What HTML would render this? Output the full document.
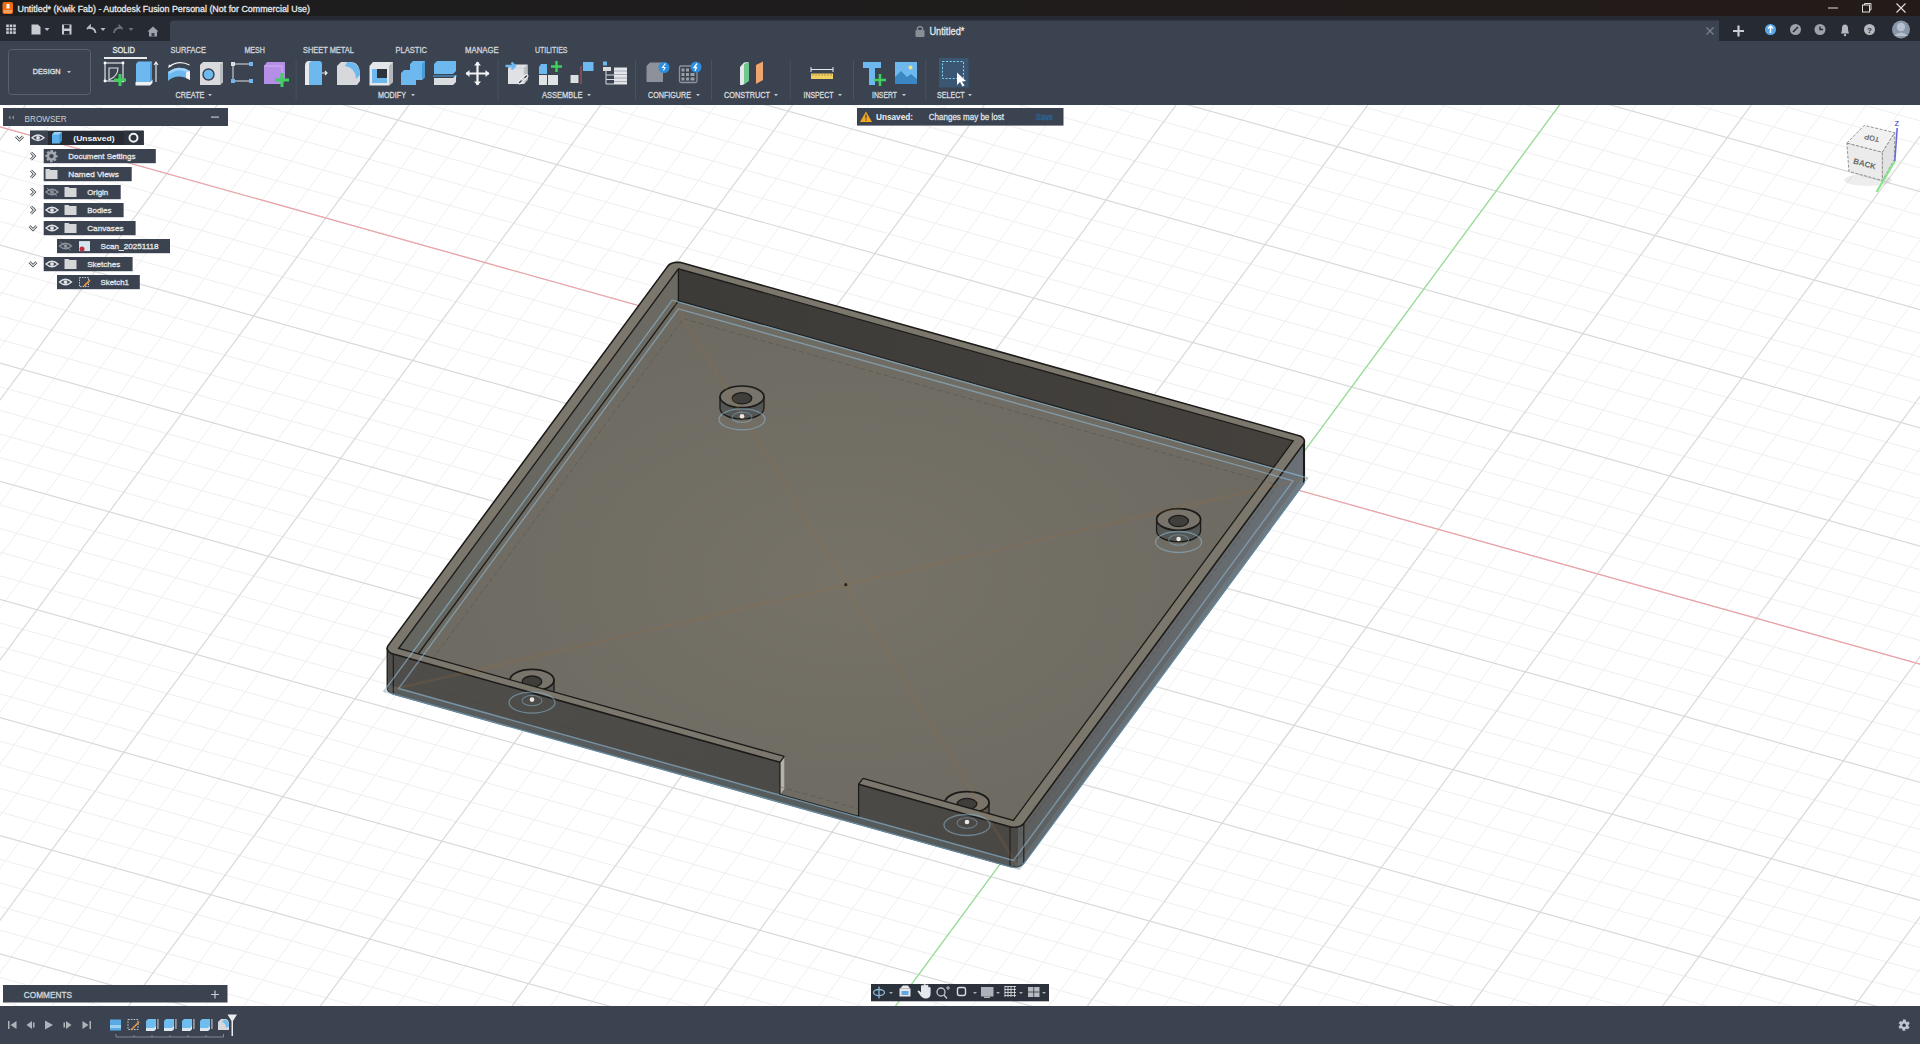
<!DOCTYPE html>
<html><head><meta charset="utf-8"><title>Autodesk Fusion</title>
<style>
html,body{margin:0;padding:0;width:1920px;height:1044px;overflow:hidden;background:#fff;font-family:"Liberation Sans", sans-serif;}
#root{position:relative;width:1920px;height:1044px;overflow:hidden;}
svg text{font-family:"Liberation Sans", sans-serif;}
</style></head><body><div id="root">
<svg width="1920" height="1044" viewBox="0 0 1920 1044" style="position:absolute;left:0;top:0"><defs>
<linearGradient id="gBack" x1="0" y1="0" x2="1" y2="0"><stop offset="0" stop-color="#3d3b38"/><stop offset="1" stop-color="#44413d"/></linearGradient>
<linearGradient id="gLeft" x1="0" y1="0" x2="0" y2="1"><stop offset="0" stop-color="#6c6a63"/><stop offset="1" stop-color="#64655f"/></linearGradient>
<radialGradient id="gFloor" cx="0.5" cy="0.5" r="0.7"><stop offset="0" stop-color="#767268"/><stop offset="1" stop-color="#6a675f"/></radialGradient>
<linearGradient id="gFront" x1="0" y1="0" x2="1" y2="0"><stop offset="0" stop-color="#4f4d49"/><stop offset="1" stop-color="#4a4845"/></linearGradient>
<linearGradient id="gRight" x1="0" y1="0" x2="1" y2="0"><stop offset="0" stop-color="#5d5f5f"/><stop offset="1" stop-color="#6a7075"/></linearGradient>
</defs><rect x="0" y="0" width="1920" height="1044" fill="#ffffff"/><g stroke="#efefef" stroke-width="1"><line x1="269.8" y1="-1215.2" x2="-1462.3" y2="1135.3"/><line x1="301.6" y1="-1206.3" x2="-1430.5" y2="1144.2"/><line x1="333.4" y1="-1197.4" x2="-1398.7" y2="1153.1"/><line x1="365.2" y1="-1188.5" x2="-1366.9" y2="1162.0"/><line x1="428.7" y1="-1170.8" x2="-1303.3" y2="1179.8"/><line x1="460.5" y1="-1161.9" x2="-1271.5" y2="1188.7"/><line x1="492.3" y1="-1153.0" x2="-1239.7" y2="1197.6"/><line x1="524.1" y1="-1144.1" x2="-1208.0" y2="1206.5"/><line x1="587.7" y1="-1126.3" x2="-1144.4" y2="1224.3"/><line x1="619.5" y1="-1117.4" x2="-1112.6" y2="1233.2"/><line x1="651.3" y1="-1108.5" x2="-1080.8" y2="1242.1"/><line x1="683.1" y1="-1099.6" x2="-1049.0" y2="1251.0"/><line x1="746.7" y1="-1081.8" x2="-985.4" y2="1268.8"/><line x1="778.5" y1="-1072.9" x2="-953.6" y2="1277.7"/><line x1="810.3" y1="-1064.0" x2="-921.8" y2="1286.6"/><line x1="842.1" y1="-1055.1" x2="-890.0" y2="1295.5"/><line x1="905.7" y1="-1037.3" x2="-826.4" y2="1313.2"/><line x1="937.4" y1="-1028.4" x2="-794.6" y2="1322.1"/><line x1="969.2" y1="-1019.5" x2="-762.8" y2="1331.0"/><line x1="1001.0" y1="-1010.6" x2="-731.0" y2="1339.9"/><line x1="1064.6" y1="-992.8" x2="-667.5" y2="1357.7"/><line x1="1096.4" y1="-983.9" x2="-635.7" y2="1366.6"/><line x1="1128.2" y1="-975.0" x2="-603.9" y2="1375.5"/><line x1="1160.0" y1="-966.1" x2="-572.1" y2="1384.4"/><line x1="1223.6" y1="-948.4" x2="-508.5" y2="1402.2"/><line x1="1255.4" y1="-939.5" x2="-476.7" y2="1411.1"/><line x1="1287.2" y1="-930.6" x2="-444.9" y2="1420.0"/><line x1="1319.0" y1="-921.7" x2="-413.1" y2="1428.9"/><line x1="1382.6" y1="-903.9" x2="-349.5" y2="1446.7"/><line x1="1414.4" y1="-895.0" x2="-317.7" y2="1455.6"/><line x1="1446.2" y1="-886.1" x2="-285.9" y2="1464.5"/><line x1="1477.9" y1="-877.2" x2="-254.1" y2="1473.4"/><line x1="1541.5" y1="-859.4" x2="-190.5" y2="1491.2"/><line x1="1573.3" y1="-850.5" x2="-158.8" y2="1500.1"/><line x1="1605.1" y1="-841.6" x2="-127.0" y2="1509.0"/><line x1="1636.9" y1="-832.7" x2="-95.2" y2="1517.9"/><line x1="1700.5" y1="-814.9" x2="-31.6" y2="1535.6"/><line x1="1732.3" y1="-806.0" x2="0.2" y2="1544.5"/><line x1="1764.1" y1="-797.1" x2="32.0" y2="1553.4"/><line x1="1795.9" y1="-788.2" x2="63.8" y2="1562.3"/><line x1="1859.5" y1="-770.4" x2="127.4" y2="1580.1"/><line x1="1891.3" y1="-761.5" x2="159.2" y2="1589.0"/><line x1="1923.1" y1="-752.6" x2="191.0" y2="1597.9"/><line x1="1954.9" y1="-743.7" x2="222.8" y2="1606.8"/><line x1="2018.4" y1="-726.0" x2="286.4" y2="1624.6"/><line x1="2050.2" y1="-717.1" x2="318.2" y2="1633.5"/><line x1="2082.0" y1="-708.2" x2="350.0" y2="1642.4"/><line x1="2113.8" y1="-699.3" x2="381.7" y2="1651.3"/><line x1="2177.4" y1="-681.5" x2="445.3" y2="1669.1"/><line x1="2209.2" y1="-672.6" x2="477.1" y2="1678.0"/><line x1="2241.0" y1="-663.7" x2="508.9" y2="1686.9"/><line x1="2272.8" y1="-654.8" x2="540.7" y2="1695.8"/><line x1="2336.4" y1="-637.0" x2="604.3" y2="1713.6"/><line x1="2368.2" y1="-628.1" x2="636.1" y2="1722.5"/><line x1="2400.0" y1="-619.2" x2="667.9" y2="1731.4"/><line x1="2431.8" y1="-610.3" x2="699.7" y2="1740.3"/><line x1="2495.4" y1="-592.5" x2="763.3" y2="1758.0"/><line x1="2527.1" y1="-583.6" x2="795.1" y2="1766.9"/><line x1="2558.9" y1="-574.7" x2="826.9" y2="1775.8"/><line x1="2590.7" y1="-565.8" x2="858.7" y2="1784.7"/><line x1="2654.3" y1="-548.0" x2="922.2" y2="1802.5"/><line x1="2686.1" y1="-539.1" x2="954.0" y2="1811.4"/><line x1="2717.9" y1="-530.2" x2="985.8" y2="1820.3"/><line x1="2749.7" y1="-521.3" x2="1017.6" y2="1829.2"/><line x1="2813.3" y1="-503.6" x2="1081.2" y2="1847.0"/><line x1="2845.1" y1="-494.7" x2="1113.0" y2="1855.9"/><line x1="2876.9" y1="-485.8" x2="1144.8" y2="1864.8"/><line x1="2908.7" y1="-476.9" x2="1176.6" y2="1873.7"/><line x1="2972.3" y1="-459.1" x2="1240.2" y2="1891.5"/><line x1="3004.1" y1="-450.2" x2="1272.0" y2="1900.4"/><line x1="3035.9" y1="-441.3" x2="1303.8" y2="1909.3"/><line x1="3067.6" y1="-432.4" x2="1335.6" y2="1918.2"/><line x1="3131.2" y1="-414.6" x2="1399.2" y2="1936.0"/><line x1="3163.0" y1="-405.7" x2="1430.9" y2="1944.9"/><line x1="3194.8" y1="-396.8" x2="1462.7" y2="1953.8"/><line x1="3226.6" y1="-387.9" x2="1494.5" y2="1962.7"/><line x1="3290.2" y1="-370.1" x2="1558.1" y2="1980.4"/><line x1="3322.0" y1="-361.2" x2="1589.9" y2="1989.3"/><line x1="3353.8" y1="-352.3" x2="1621.7" y2="1998.2"/><line x1="3385.6" y1="-343.4" x2="1653.5" y2="2007.1"/><line x1="-527.4" y1="-705.9" x2="3287.9" y2="361.7"/><line x1="-541.8" y1="-686.3" x2="3273.4" y2="381.2"/><line x1="-556.3" y1="-666.7" x2="3259.0" y2="400.8"/><line x1="-570.7" y1="-647.1" x2="3244.6" y2="420.4"/><line x1="-599.6" y1="-607.9" x2="3215.7" y2="459.6"/><line x1="-614.0" y1="-588.3" x2="3201.3" y2="479.2"/><line x1="-628.5" y1="-568.7" x2="3186.8" y2="498.8"/><line x1="-642.9" y1="-549.2" x2="3172.4" y2="518.4"/><line x1="-671.8" y1="-510.0" x2="3143.5" y2="557.5"/><line x1="-686.2" y1="-490.4" x2="3129.1" y2="577.1"/><line x1="-700.6" y1="-470.8" x2="3114.7" y2="596.7"/><line x1="-715.1" y1="-451.2" x2="3100.2" y2="616.3"/><line x1="-743.9" y1="-412.0" x2="3071.4" y2="655.5"/><line x1="-758.4" y1="-392.5" x2="3056.9" y2="675.1"/><line x1="-772.8" y1="-372.9" x2="3042.5" y2="694.7"/><line x1="-787.2" y1="-353.3" x2="3028.1" y2="714.2"/><line x1="-816.1" y1="-314.1" x2="2999.2" y2="753.4"/><line x1="-830.5" y1="-294.5" x2="2984.8" y2="773.0"/><line x1="-845.0" y1="-274.9" x2="2970.3" y2="792.6"/><line x1="-859.4" y1="-255.3" x2="2955.9" y2="812.2"/><line x1="-888.3" y1="-216.2" x2="2927.0" y2="851.4"/><line x1="-902.7" y1="-196.6" x2="2912.6" y2="870.9"/><line x1="-917.1" y1="-177.0" x2="2898.1" y2="890.5"/><line x1="-931.6" y1="-157.4" x2="2883.7" y2="910.1"/><line x1="-960.4" y1="-118.2" x2="2854.8" y2="949.3"/><line x1="-974.9" y1="-98.6" x2="2840.4" y2="968.9"/><line x1="-989.3" y1="-79.0" x2="2826.0" y2="988.5"/><line x1="-1003.7" y1="-59.5" x2="2811.5" y2="1008.1"/><line x1="-1032.6" y1="-20.3" x2="2782.7" y2="1047.2"/><line x1="-1047.0" y1="-0.7" x2="2768.2" y2="1066.8"/><line x1="-1061.5" y1="18.9" x2="2753.8" y2="1086.4"/><line x1="-1075.9" y1="38.5" x2="2739.4" y2="1106.0"/><line x1="-1104.8" y1="77.7" x2="2710.5" y2="1145.2"/><line x1="-1119.2" y1="97.2" x2="2696.1" y2="1164.8"/><line x1="-1133.6" y1="116.8" x2="2681.6" y2="1184.4"/><line x1="-1148.1" y1="136.4" x2="2667.2" y2="1203.9"/><line x1="-1176.9" y1="175.6" x2="2638.3" y2="1243.1"/><line x1="-1191.4" y1="195.2" x2="2623.9" y2="1262.7"/><line x1="-1205.8" y1="214.8" x2="2609.5" y2="1282.3"/><line x1="-1220.2" y1="234.4" x2="2595.0" y2="1301.9"/><line x1="-1249.1" y1="273.5" x2="2566.2" y2="1341.1"/><line x1="-1263.5" y1="293.1" x2="2551.7" y2="1360.6"/><line x1="-1278.0" y1="312.7" x2="2537.3" y2="1380.2"/><line x1="-1292.4" y1="332.3" x2="2522.9" y2="1399.8"/><line x1="-1321.3" y1="371.5" x2="2494.0" y2="1439.0"/><line x1="-1335.7" y1="391.1" x2="2479.6" y2="1458.6"/><line x1="-1350.2" y1="410.7" x2="2465.1" y2="1478.2"/><line x1="-1364.6" y1="430.2" x2="2450.7" y2="1497.8"/><line x1="-1393.5" y1="469.4" x2="2421.8" y2="1536.9"/><line x1="-1407.9" y1="489.0" x2="2407.4" y2="1556.5"/><line x1="-1422.3" y1="508.6" x2="2393.0" y2="1576.1"/><line x1="-1436.8" y1="528.2" x2="2378.5" y2="1595.7"/><line x1="-1465.6" y1="567.4" x2="2349.7" y2="1634.9"/><line x1="-1480.1" y1="586.9" x2="2335.2" y2="1654.5"/><line x1="-1494.5" y1="606.5" x2="2320.8" y2="1674.1"/><line x1="-1508.9" y1="626.1" x2="2306.4" y2="1693.6"/><line x1="-1537.8" y1="665.3" x2="2277.5" y2="1732.8"/><line x1="-1552.2" y1="684.9" x2="2263.1" y2="1752.4"/><line x1="-1566.7" y1="704.5" x2="2248.6" y2="1772.0"/><line x1="-1581.1" y1="724.1" x2="2234.2" y2="1791.6"/><line x1="-1610.0" y1="763.2" x2="2205.3" y2="1830.8"/><line x1="-1624.4" y1="782.8" x2="2190.9" y2="1850.3"/><line x1="-1638.8" y1="802.4" x2="2176.4" y2="1869.9"/><line x1="-1653.3" y1="822.0" x2="2162.0" y2="1889.5"/><line x1="-1682.1" y1="861.2" x2="2133.1" y2="1928.7"/><line x1="-1696.6" y1="880.8" x2="2118.7" y2="1948.3"/><line x1="-1711.0" y1="900.4" x2="2104.3" y2="1967.9"/><line x1="-1725.4" y1="919.9" x2="2089.8" y2="1987.5"/><line x1="-1754.3" y1="959.1" x2="2061.0" y2="2026.6"/><line x1="-1768.7" y1="978.7" x2="2046.5" y2="2046.2"/><line x1="-1783.2" y1="998.3" x2="2032.1" y2="2065.8"/><line x1="-1797.6" y1="1017.9" x2="2017.7" y2="2085.4"/></g><g stroke="#d9d9d9" stroke-width="1.2"><line x1="238.0" y1="-1224.1" x2="-1494.1" y2="1126.4"/><line x1="396.9" y1="-1179.6" x2="-1335.1" y2="1170.9"/><line x1="555.9" y1="-1135.2" x2="-1176.2" y2="1215.4"/><line x1="714.9" y1="-1090.7" x2="-1017.2" y2="1259.9"/><line x1="873.9" y1="-1046.2" x2="-858.2" y2="1304.3"/><line x1="1032.8" y1="-1001.7" x2="-699.2" y2="1348.8"/><line x1="1191.8" y1="-957.2" x2="-540.3" y2="1393.3"/><line x1="1350.8" y1="-912.8" x2="-381.3" y2="1437.8"/><line x1="1509.7" y1="-868.3" x2="-222.3" y2="1482.3"/><line x1="1668.7" y1="-823.8" x2="-63.4" y2="1526.8"/><line x1="1827.7" y1="-779.3" x2="95.6" y2="1571.2"/><line x1="1986.6" y1="-734.8" x2="254.6" y2="1615.7"/><line x1="2145.6" y1="-690.4" x2="413.5" y2="1660.2"/><line x1="2304.6" y1="-645.9" x2="572.5" y2="1704.7"/><line x1="2463.6" y1="-601.4" x2="731.5" y2="1749.2"/><line x1="2622.5" y1="-556.9" x2="890.4" y2="1793.6"/><line x1="2781.5" y1="-512.4" x2="1049.4" y2="1838.1"/><line x1="2940.5" y1="-468.0" x2="1208.4" y2="1882.6"/><line x1="3099.4" y1="-423.5" x2="1367.4" y2="1927.1"/><line x1="3258.4" y1="-379.0" x2="1526.3" y2="1971.5"/><line x1="-513.0" y1="-725.4" x2="3302.3" y2="342.1"/><line x1="-585.1" y1="-627.5" x2="3230.1" y2="440.0"/><line x1="-657.3" y1="-529.6" x2="3158.0" y2="538.0"/><line x1="-729.5" y1="-431.6" x2="3085.8" y2="635.9"/><line x1="-801.7" y1="-333.7" x2="3013.6" y2="733.8"/><line x1="-873.8" y1="-235.7" x2="2941.4" y2="831.8"/><line x1="-946.0" y1="-137.8" x2="2869.3" y2="929.7"/><line x1="-1018.2" y1="-39.9" x2="2797.1" y2="1027.7"/><line x1="-1090.3" y1="58.1" x2="2724.9" y2="1125.6"/><line x1="-1162.5" y1="156.0" x2="2652.8" y2="1223.5"/><line x1="-1234.7" y1="254.0" x2="2580.6" y2="1321.5"/><line x1="-1306.8" y1="351.9" x2="2508.4" y2="1419.4"/><line x1="-1379.0" y1="449.8" x2="2436.3" y2="1517.3"/><line x1="-1451.2" y1="547.8" x2="2364.1" y2="1615.3"/><line x1="-1523.4" y1="645.7" x2="2291.9" y2="1713.2"/><line x1="-1595.5" y1="743.7" x2="2219.8" y2="1811.2"/><line x1="-1667.7" y1="841.6" x2="2147.6" y2="1909.1"/><line x1="-1739.9" y1="939.5" x2="2075.4" y2="2007.0"/></g><line x1="-946.0" y1="-137.8" x2="2869.3" y2="929.7" stroke="#efa0a6" stroke-width="1.15" /><line x1="2145.6" y1="-690.4" x2="413.5" y2="1660.2" stroke="#93df93" stroke-width="1.2" /><polygon points="678.4,268.8 1293.2,440.8 1293.2,472.8 678.4,300.8" fill="url(#gBack)" /><polygon points="678.4,268.8 398.6,648.5 398.6,680.5 678.4,300.8" fill="url(#gLeft)" /><polygon points="678.4,300.8 1293.2,472.8 1013.4,852.5 863.0,810.4 858.6,816.3 779.9,794.3 784.3,788.4 398.6,680.5" fill="url(#gFloor)" /><path d="M398.6,680.5 L678.4,300.8 L1293.2,472.8" fill="none" stroke="#1c1b19" stroke-width="1.3"/><line x1="678.4" y1="300.8" x2="678.4" y2="268.8" stroke="#1c1b19" stroke-width="1.3" /><path d="M720.0,396.8 L720.0,408.3 A22.0,10.8 0 0 0 764.0,408.3 L764.0,396.8 Z" fill="#545654" stroke="#1c1b19" stroke-width="1.3"/><ellipse cx="742.0" cy="396.8" rx="22.0" ry="10.8" fill="#78746b" stroke="#1c1b19" stroke-width="1.7"/><ellipse cx="742.0" cy="398.3" rx="9.8" ry="5.6" fill="#403e3a" stroke="#1c1b19" stroke-width="1.3"/><path d="M1156.6,519.5 L1156.6,531.0 A22.0,10.8 0 0 0 1200.6,531.0 L1200.6,519.5 Z" fill="#545654" stroke="#1c1b19" stroke-width="1.3"/><ellipse cx="1178.6" cy="519.5" rx="22.0" ry="10.8" fill="#78746b" stroke="#1c1b19" stroke-width="1.7"/><ellipse cx="1178.6" cy="521.0" rx="9.8" ry="5.6" fill="#403e3a" stroke="#1c1b19" stroke-width="1.3"/><path d="M510.0,680.1 L510.0,691.6 A22.0,10.8 0 0 0 554.0,691.6 L554.0,680.1 Z" fill="#545654" stroke="#1c1b19" stroke-width="1.3"/><ellipse cx="532.0" cy="680.1" rx="22.0" ry="10.8" fill="#78746b" stroke="#1c1b19" stroke-width="1.7"/><ellipse cx="532.0" cy="681.6" rx="9.8" ry="5.6" fill="#403e3a" stroke="#1c1b19" stroke-width="1.3"/><path d="M945.0,802.5 L945.0,814.0 A22.0,10.8 0 0 0 989.0,814.0 L989.0,802.5 Z" fill="#545654" stroke="#1c1b19" stroke-width="1.3"/><ellipse cx="967.0" cy="802.5" rx="22.0" ry="10.8" fill="#78746b" stroke="#1c1b19" stroke-width="1.7"/><ellipse cx="967.0" cy="804.0" rx="9.8" ry="5.6" fill="#403e3a" stroke="#1c1b19" stroke-width="1.3"/><polygon points="779.9,762.3 393.3,654.1 391.6,653.5 390.0,652.6 388.8,651.6 387.9,650.5 387.3,649.3 387.2,648.0 387.5,646.8 388.1,645.6 667.8,266.1 668.8,265.0 670.2,264.0 671.8,263.2 673.6,262.7 675.6,262.4 677.7,262.3 679.7,262.4 681.7,262.8 1298.3,435.4 1300.1,436.0 1301.6,436.8 1302.9,437.9 1303.8,439.0 1304.3,440.2 1304.4,441.5 1304.2,442.7 1303.5,443.9 1023.8,823.4 1022.8,824.5 1021.5,825.5 1019.8,826.3 1018.0,826.8 1016.0,827.1 1014.0,827.2 1011.9,827.1 1010.0,826.7 858.6,784.3 863.0,778.4 1013.4,820.5 1293.2,440.8 678.4,268.8 398.6,648.5 784.3,756.4" fill="#7b776d" /><polygon points="387.2,648.0 387.3,649.3 387.9,650.5 388.8,651.6 390.0,652.6 391.6,653.5 393.3,654.1 779.9,762.3 779.9,794.3 858.6,816.3 858.6,784.3 1010.0,826.7 1011.9,827.1 1014.0,827.2 1016.0,827.1 1018.0,826.8 1019.8,826.3 1021.5,825.5 1022.8,824.5 1023.8,823.4 1023.8,863.4 1022.8,864.5 1021.5,865.5 1019.8,866.3 1018.0,866.8 1016.0,867.1 1014.0,867.2 1011.9,867.1 1010.0,866.7 858.6,824.3 779.9,802.3 393.3,694.1 391.6,693.5 390.0,692.6 388.8,691.6 387.9,690.5 387.3,689.3 387.2,688.0" fill="url(#gFront)" /><polygon points="1018.0,826.8 1020.4,826.0 1022.4,824.9 1023.8,823.4 1303.5,443.9 1304.2,442.7 1304.4,441.5 1304.4,481.5 1304.2,482.7 1303.5,483.9 1023.8,863.4 1022.4,864.9 1020.4,866.0 1018.0,866.8" fill="url(#gRight)" /><polygon points="387.2,680.0 387.3,681.3 387.9,682.5 388.8,683.6 390.0,684.6 391.6,685.5 393.3,686.1 1010.0,858.7 1011.9,859.1 1014.0,859.2 1016.0,859.1 1018.0,858.8 1019.8,858.3 1021.5,857.5 1022.8,856.5 1023.8,855.4 1303.5,475.9 1304.2,474.7 1304.4,473.5 1304.4,481.5 1304.2,482.7 1303.5,483.9 1023.8,863.4 1022.8,864.5 1021.5,865.5 1019.8,866.3 1018.0,866.8 1016.0,867.1 1014.0,867.2 1011.9,867.1 1010.0,866.7 393.3,694.1 391.6,693.5 390.0,692.6 388.8,691.6 387.9,690.5 387.3,689.3 387.2,688.0" fill="#8fb4cc" opacity="0.16"/><polygon points="784.3,756.4 779.9,762.3 779.9,794.3 784.3,788.4" fill="#b5b2aa" /><path d="M779.9,762.3 L393.3,654.1 L391.6,653.5 L390.0,652.6 L388.8,651.6 L387.9,650.5 L387.3,649.3 L387.2,648.0 L387.5,646.8 L388.1,645.6 L667.8,266.1 L668.8,265.0 L670.2,264.0 L671.8,263.2 L673.6,262.7 L675.6,262.4 L677.7,262.3 L679.7,262.4 L681.7,262.8 L1298.3,435.4 L1300.1,436.0 L1301.6,436.8 L1302.9,437.9 L1303.8,439.0 L1304.3,440.2 L1304.4,441.5 L1304.2,442.7 L1303.5,443.9 L1023.8,823.4 L1022.8,824.5 L1021.5,825.5 L1019.8,826.3 L1018.0,826.8 L1016.0,827.1 L1014.0,827.2 L1011.9,827.1 L1010.0,826.7 L858.6,784.3" fill="none" stroke="#1c1b19" stroke-width="1.6" stroke-linejoin="round"/><path d="M863.0,778.4 L1013.4,820.5 L1293.2,440.8 L678.4,268.8 L398.6,648.5 L784.3,756.4" fill="none" stroke="#1c1b19" stroke-width="1.3"/><path d="M863.0,778.4 L858.6,784.3 L858.6,816.3 L779.9,794.3 L779.9,762.3 L784.3,756.4" fill="none" stroke="#1c1b19" stroke-width="1.3"/><line x1="387.2" y1="648.0" x2="387.2" y2="688.0" stroke="#1c1b19" stroke-width="1.3" /><line x1="1304.4" y1="441.5" x2="1304.4" y2="481.5" stroke="#1c1b19" stroke-width="1.3" /><line x1="393.3" y1="654.1" x2="393.3" y2="694.1" stroke="#1c1b19" stroke-width="1.1" /><line x1="1023.8" y1="823.4" x2="1023.8" y2="863.4" stroke="#1c1b19" stroke-width="1.1" /><line x1="1010.0" y1="826.7" x2="1010.0" y2="866.7" stroke="#1c1b19" stroke-width="1.1" /><line x1="1303.5" y1="443.9" x2="1303.5" y2="483.9" stroke="#1c1b19" stroke-width="1.1" /><path d="M387.2,688.0 L387.3,689.3 L387.9,690.5 L388.8,691.6 L390.0,692.6 L391.6,693.5 L393.3,694.1 L1010.0,866.7 L1011.9,867.1 L1014.0,867.2 L1016.0,867.1 L1018.0,866.8 L1019.8,866.3 L1021.5,865.5 L1022.8,864.5 L1023.8,863.4 L1303.5,483.9 L1304.2,482.7 L1304.4,481.5" fill="none" stroke="#26343c" stroke-width="1.2"/><path d="M672.1,300.2 L1307.8,478.0 L1019.5,869.3 L383.8,691.4 Z" fill="none" stroke="#8fc0de" stroke-width="1.4" opacity="0.6"/><path d="M678.4,308.8 L1293.2,480.8 L1013.4,860.5 L398.6,688.5 Z" fill="none" stroke="#8fc0de" stroke-width="1.4" opacity="0.55"/><path d="M683.4,318.7 L1277.8,485.0 L1008.2,850.8 L413.8,684.5 Z" fill="none" stroke="#4a4036" stroke-width="1" stroke-dasharray="5,3" opacity="0.35"/><line x1="672.1" y1="300.2" x2="1019.5" y2="869.3" stroke="#a0703c" stroke-width="3" opacity="0.16"/><line x1="1307.8" y1="478.0" x2="383.8" y2="691.4" stroke="#a0703c" stroke-width="3" opacity="0.16"/><circle cx="845.8" cy="584.7" r="1.6" fill="#2a2722"/><ellipse cx="742.0" cy="419.3" rx="23" ry="10.5" fill="none" stroke="#8fc0de" stroke-width="1.3" opacity="0.5"/><ellipse cx="742.0" cy="417.3" rx="10" ry="5.2" fill="none" stroke="#8fc0de" stroke-width="1.1" opacity="0.45"/><circle cx="742.0" cy="416.3" r="2.3" fill="#ece8e8"/><ellipse cx="1178.6" cy="542.0" rx="23" ry="10.5" fill="none" stroke="#8fc0de" stroke-width="1.3" opacity="0.5"/><ellipse cx="1178.6" cy="540.0" rx="10" ry="5.2" fill="none" stroke="#8fc0de" stroke-width="1.1" opacity="0.45"/><circle cx="1178.6" cy="539.0" r="2.3" fill="#ece8e8"/><ellipse cx="532.0" cy="702.6" rx="23" ry="10.5" fill="none" stroke="#8fc0de" stroke-width="1.3" opacity="0.5"/><ellipse cx="532.0" cy="700.6" rx="10" ry="5.2" fill="none" stroke="#8fc0de" stroke-width="1.1" opacity="0.45"/><circle cx="532.0" cy="699.6" r="2.3" fill="#ece8e8"/><ellipse cx="967.0" cy="825.0" rx="23" ry="10.5" fill="none" stroke="#8fc0de" stroke-width="1.3" opacity="0.5"/><ellipse cx="967.0" cy="823.0" rx="10" ry="5.2" fill="none" stroke="#8fc0de" stroke-width="1.1" opacity="0.45"/><circle cx="967.0" cy="822.0" r="2.3" fill="#ece8e8"/></svg>
<svg width="1920" height="1044" viewBox="0 0 1920 1044" style="position:absolute;left:0;top:0" font-family='"Liberation Sans", sans-serif'><defs><linearGradient id="gTitle" x1="0" y1="0" x2="1" y2="0"><stop offset="0" stop-color="#1d1d1f"/><stop offset="0.5" stop-color="#1f1c1c"/><stop offset="1" stop-color="#241b18"/></linearGradient></defs><rect x="3" y="108" width="225" height="18" fill="#3b4350"/><path d="M8.5,117.5 L10.5,115.5 V119.5 Z M12,117.5 L14,115.5 V119.5 Z" fill="#8f959d"/><text x="24.6" y="121.5" font-size="9.2" font-weight="normal" fill="#c9cdd2"  textLength="42.1" lengthAdjust="spacingAndGlyphs" >BROWSER</text><rect x="211" y="116.5" width="8" height="1.2" fill="#c0c4ca"/><rect x="30" y="130.7" width="113.7" height="14.3" fill="#272c34"/><rect x="30" y="130.7" width="18" height="14.3" fill="#3b4350"/><rect x="124" y="130.7" width="19.7" height="14.3" fill="#2f353e"/><path d="M16.0,136.5 L19.5,140.0 L23.0,136.5" fill="none" stroke="#3a3f46" stroke-width="2.6"/><path d="M16.0,136.5 L19.5,140.0 L23.0,136.5" fill="none" stroke="#f0f0f0" stroke-width="1.1"/><path d="M32.0,137.8 Q38.0,132.3 44.0,137.8 Q38.0,143.3 32.0,137.8 Z" fill="none" stroke="#e1e3e6" stroke-width="1.4"/><circle cx="38.0" cy="137.8" r="1.9" fill="#e1e3e6"/><path d="M52,134.5 L54.5,132 H62 V140.5 L59.5,143.5 H52 Z" fill="#5db0ec"/><path d="M52,134.5 L54.5,132 H62 L59.5,134.5 Z" fill="#9ad2f7"/><path d="M59.5,134.5 L62,132 V140.5 L59.5,143.5 Z" fill="#3d8fcf"/><text x="73.3" y="141.2" font-size="8" font-weight="bold" fill="#f2f3f5"  textLength="41.3" lengthAdjust="spacingAndGlyphs" >(Unsaved)</text><circle cx="133.5" cy="137.8" r="4" fill="none" stroke="#f2f2f2" stroke-width="2"/><rect x="43.7" y="149.0" width="112.1" height="14.2" fill="#3b4350"/><path d="M31.0,152.6 L34.5,156.1 L31.0,159.6" fill="none" stroke="#3a3f46" stroke-width="2.6"/><path d="M31.0,152.6 L34.5,156.1 L31.0,159.6" fill="none" stroke="#f0f0f0" stroke-width="1.1"/><path d="M50.32,150.01 L52.68,150.01 L53.26,151.85 L54.07,152.29 L54.97,150.96 L56.64,152.63 L55.75,154.34 L56.02,155.22 L57.59,154.92 L57.59,157.28 L55.75,157.86 L55.31,158.67 L56.64,159.57 L54.97,161.24 L53.26,160.35 L52.38,160.62 L52.68,162.19 L50.32,162.19 L49.74,160.35 L48.93,159.91 L48.03,161.24 L46.36,159.57 L47.25,157.86 L46.98,156.98 L45.41,157.28 L45.41,154.92 L47.25,154.34 L47.69,153.53 L46.36,152.63 L48.03,150.96 L49.74,151.85 L50.62,151.58 Z" fill="#a3a8af"/><circle cx="51.5" cy="156.1" r="2.2" fill="#3b4350"/><text x="68.3" y="159.0" font-size="8" font-weight="normal" fill="#e4e6e9" stroke="#e4e6e9" stroke-width="0.3" textLength="67.1" lengthAdjust="spacingAndGlyphs" >Document Settings</text><rect x="43.7" y="167.0" width="88.0" height="14.2" fill="#3b4350"/><path d="M31.0,170.6 L34.5,174.1 L31.0,177.6" fill="none" stroke="#3a3f46" stroke-width="2.6"/><path d="M31.0,170.6 L34.5,174.1 L31.0,177.6" fill="none" stroke="#f0f0f0" stroke-width="1.1"/><path d="M45.5,169.1 H49.5 L50.5,170.1 H57.5 V179.1 H45.5 Z" fill="#d5d6d8"/><text x="68.3" y="177.0" font-size="8" font-weight="normal" fill="#e4e6e9" stroke="#e4e6e9" stroke-width="0.3" textLength="50.5" lengthAdjust="spacingAndGlyphs" >Named Views</text><rect x="43.7" y="185.0" width="77.0" height="14.2" fill="#3b4350"/><path d="M31.0,188.6 L34.5,192.1 L31.0,195.6" fill="none" stroke="#3a3f46" stroke-width="2.6"/><path d="M31.0,188.6 L34.5,192.1 L31.0,195.6" fill="none" stroke="#f0f0f0" stroke-width="1.1"/><path d="M46.0,192.1 Q52.0,186.6 58.0,192.1 Q52.0,197.6 46.0,192.1 Z" fill="none" stroke="#8e939a" stroke-width="1.4"/><circle cx="52.0" cy="192.1" r="1.9" fill="#8e939a"/><path d="M47.0,188.1 L57.0,196.1" stroke="#8e939a" stroke-width="1"/><path d="M64.5,187.1 H68.5 L69.5,188.1 H76.5 V197.1 H64.5 Z" fill="#d5d6d8"/><text x="87.2" y="195.0" font-size="8" font-weight="normal" fill="#e4e6e9" stroke="#e4e6e9" stroke-width="0.3" textLength="21.0" lengthAdjust="spacingAndGlyphs" >Origin</text><rect x="43.7" y="203.0" width="79.9" height="14.2" fill="#3b4350"/><path d="M31.0,206.6 L34.5,210.1 L31.0,213.6" fill="none" stroke="#3a3f46" stroke-width="2.6"/><path d="M31.0,206.6 L34.5,210.1 L31.0,213.6" fill="none" stroke="#f0f0f0" stroke-width="1.1"/><path d="M46.0,210.1 Q52.0,204.6 58.0,210.1 Q52.0,215.6 46.0,210.1 Z" fill="none" stroke="#e1e3e6" stroke-width="1.4"/><circle cx="52.0" cy="210.1" r="1.9" fill="#e1e3e6"/><path d="M64.5,205.1 H68.5 L69.5,206.1 H76.5 V215.1 H64.5 Z" fill="#d5d6d8"/><text x="87.2" y="213.0" font-size="8" font-weight="normal" fill="#e4e6e9" stroke="#e4e6e9" stroke-width="0.3" textLength="24.3" lengthAdjust="spacingAndGlyphs" >Bodies</text><rect x="43.7" y="221.0" width="91.9" height="14.2" fill="#3b4350"/><path d="M29.5,226.1 L33.0,229.6 L36.5,226.1" fill="none" stroke="#3a3f46" stroke-width="2.6"/><path d="M29.5,226.1 L33.0,229.6 L36.5,226.1" fill="none" stroke="#f0f0f0" stroke-width="1.1"/><path d="M46.0,228.1 Q52.0,222.6 58.0,228.1 Q52.0,233.6 46.0,228.1 Z" fill="none" stroke="#e1e3e6" stroke-width="1.4"/><circle cx="52.0" cy="228.1" r="1.9" fill="#e1e3e6"/><path d="M64.5,223.1 H68.5 L69.5,224.1 H76.5 V233.1 H64.5 Z" fill="#d5d6d8"/><text x="87.2" y="231.0" font-size="8" font-weight="normal" fill="#e4e6e9" stroke="#e4e6e9" stroke-width="0.3" textLength="36.4" lengthAdjust="spacingAndGlyphs" >Canvases</text><rect x="57.0" y="239.0" width="113.0" height="14.2" fill="#3b4350"/><path d="M59.5,246.1 Q65.5,240.6 71.5,246.1 Q65.5,251.6 59.5,246.1 Z" fill="none" stroke="#8e939a" stroke-width="1.4"/><circle cx="65.5" cy="246.1" r="1.9" fill="#8e939a"/><path d="M60.5,242.1 L70.5,250.1" stroke="#8e939a" stroke-width="1"/><rect x="79" y="241.1" width="11" height="10" fill="#d6e6ee"/><circle cx="82" cy="249.1" r="2.5" fill="#c0303a"/><text x="100.6" y="249.0" font-size="8" font-weight="normal" fill="#e4e6e9" stroke="#e4e6e9" stroke-width="0.3" textLength="58.0" lengthAdjust="spacingAndGlyphs" >Scan_20251118</text><rect x="43.7" y="257.0" width="88.9" height="14.2" fill="#3b4350"/><path d="M29.5,262.1 L33.0,265.6 L36.5,262.1" fill="none" stroke="#3a3f46" stroke-width="2.6"/><path d="M29.5,262.1 L33.0,265.6 L36.5,262.1" fill="none" stroke="#f0f0f0" stroke-width="1.1"/><path d="M46.0,264.1 Q52.0,258.6 58.0,264.1 Q52.0,269.6 46.0,264.1 Z" fill="none" stroke="#e1e3e6" stroke-width="1.4"/><circle cx="52.0" cy="264.1" r="1.9" fill="#e1e3e6"/><path d="M64.5,259.1 H68.5 L69.5,260.1 H76.5 V269.1 H64.5 Z" fill="#d5d6d8"/><text x="87.2" y="267.0" font-size="8" font-weight="normal" fill="#e4e6e9" stroke="#e4e6e9" stroke-width="0.3" textLength="33.1" lengthAdjust="spacingAndGlyphs" >Sketches</text><rect x="57.0" y="275.0" width="82.8" height="14.2" fill="#3b4350"/><path d="M59.5,282.1 Q65.5,276.6 71.5,282.1 Q65.5,287.6 59.5,282.1 Z" fill="none" stroke="#e1e3e6" stroke-width="1.4"/><circle cx="65.5" cy="282.1" r="1.9" fill="#e1e3e6"/><rect x="79.5" y="277.6" width="9" height="9" fill="none" stroke="#c8ccd2" stroke-width="1" stroke-dasharray="1.5,1"/><path d="M84,286.1 L90,280.1" stroke="#e79a4a" stroke-width="1.6"/><text x="100.6" y="285.0" font-size="8" font-weight="normal" fill="#e4e6e9" stroke="#e4e6e9" stroke-width="0.3" textLength="28.3" lengthAdjust="spacingAndGlyphs" >Sketch1</text><rect x="857" y="108" width="206.5" height="17.6" fill="#3b4350"/><path d="M866,111.5 L872,122 H860 Z" fill="#f2a91c"/><rect x="865.4" y="114.5" width="1.2" height="4" fill="#3b4350"/><rect x="865.4" y="119.4" width="1.2" height="1.2" fill="#3b4350"/><text x="876.0" y="120.2" font-size="8.6" font-weight="bold" fill="#eceef0"  textLength="37.0" lengthAdjust="spacingAndGlyphs" >Unsaved:</text><text x="928.8" y="120.2" font-size="8.6" font-weight="normal" fill="#dfe2e6" stroke="#dfe2e6" stroke-width="0.3" textLength="75.2" lengthAdjust="spacingAndGlyphs" >Changes may be lost</text><text x="1036.0" y="120.2" font-size="8.6" font-weight="normal" fill="#2766a6" stroke="#2766a6" stroke-width="0.3" textLength="17.0" lengthAdjust="spacingAndGlyphs" >Save</text><ellipse cx="1868" cy="180" rx="24" ry="6" fill="#000" opacity="0.07"/><path d="M1846.9,143.1 L1882.4,152.2 L1882.4,180.5 L1848.9,171.4 Z" fill="#ebebeb" stroke="#8a8a8a" stroke-width="0.9" stroke-dasharray="3,1.5"/><path d="M1846.9,143.1 L1864.2,125.4 L1894.8,132.6 L1882.4,152.2 Z" fill="#f1f1f1" stroke="#8a8a8a" stroke-width="0.9" stroke-dasharray="3,1.5"/><path d="M1882.4,152.2 L1894.8,132.6 L1894.3,159.4 L1882.4,180.5 Z" fill="#e2e2e2" stroke="#8a8a8a" stroke-width="0.9" stroke-dasharray="3,1.5"/><text x="1871.8" y="141" font-size="7.5" font-weight="bold" fill="#6f6f6f" text-anchor="middle" transform="rotate(192 1871.8 138.3)">TOP</text><text x="1864.7" y="166.5" font-size="8" font-weight="bold" fill="#666" text-anchor="middle" transform="rotate(15 1864.7 163.7)">BACK</text><path d="M1897.2,128 L1894.8,161.3" stroke="#6a6ae0" stroke-width="1.6"/><text x="1894.5" y="125.5" font-size="7.5" font-weight="bold" fill="#6a6ae0">Z</text><path d="M1894.8,161.3 L1876.6,192" stroke="#86e486" stroke-width="2.2"/><rect x="3" y="985" width="224.5" height="17.5" fill="#3b4350"/><text x="23.8" y="998.3" font-size="9" font-weight="normal" fill="#d6d9de" stroke="#d6d9de" stroke-width="0.3" textLength="48.2" lengthAdjust="spacingAndGlyphs" >COMMENTS</text><path d="M215,990.5 V998.5 M211,994.5 H219" stroke="#c9ccd1" stroke-width="1.2"/><rect x="871" y="984" width="178" height="17.3" fill="#2c323b"/><ellipse cx="879" cy="992.5" rx="5.5" ry="3" fill="none" stroke="#8cb8d8" stroke-width="1.3"/><path d="M879,986.5 V998.5" stroke="#8cb8d8" stroke-width="1.3"/><path d="M889,992 H893 L891,994 Z" fill="#aab0b8"/><rect x="899.5" y="988.5" width="11" height="8" fill="#e6e8eb"/><rect x="901.5" y="991" width="7" height="4" fill="#5fa8e0"/><path d="M900,988.5 L903,985.5 H908 L910,988.5" fill="#e6e8eb"/><path d="M919,993.5 L917.5,991.5 Q918,990 919.5,991 L921,992.5 V986.5 Q921,985 922.3,985 Q923.5,985 923.5,986.5 V990 V985.5 Q923.5,984 924.8,984 Q926,984 926,985.5 V990 V986 Q926,984.8 927.2,984.8 Q928.4,984.8 928.4,986 V990.5 V988 Q928.4,987 929.5,987 Q930.6,987 930.6,988 V993.5 Q930.6,998.5 925.5,998.5 Q922,998.5 919,993.5 Z" fill="#e6e8eb"/><circle cx="941" cy="992" r="4" fill="none" stroke="#c2c6cc" stroke-width="1.3"/><path d="M944,995 L947,998.5" stroke="#c2c6cc" stroke-width="1.4"/><path d="M948,986 V990 M946,988 H950" stroke="#c2c6cc" stroke-width="1"/><rect x="957.5" y="987.5" width="8" height="8" rx="2" fill="none" stroke="#d9dce0" stroke-width="1.4"/><path d="M973,992 H977 L975,994 Z" fill="#aab0b8"/><rect x="981" y="987" width="12.5" height="9.5" fill="#aeb2b8"/><rect x="984" y="996.5" width="6" height="1.5" fill="#aeb2b8"/><path d="M996,992 H1000 L998,994 Z" fill="#aab0b8"/><path d="M1004.5,986.5 H1016 M1004.5,989.5 H1016 M1004.5,992.5 H1016 M1004.5,995.5 H1016 M1005,986 V997 M1008,986 V997 M1011,986 V997 M1014.5,986 V997" stroke="#d3d6da" stroke-width="0.9"/><path d="M1019,992 H1023 L1021,994 Z" fill="#aab0b8"/><rect x="1028" y="987" width="11.5" height="10" fill="#b8bcc2"/><path d="M1033.75,987 V997 M1028,992 H1039.5" stroke="#2c323b" stroke-width="0.8"/><path d="M1042,992 H1046 L1044,994 Z" fill="#aab0b8"/><rect x="0" y="1006" width="1920" height="38" fill="#3b4350"/><rect x="8" y="1021" width="1.5" height="8" fill="#aeb3ba"/><path d="M16.5,1021 V1029 L10.5,1025 Z" fill="#aeb3ba"/><path d="M32,1021 V1029 L26.5,1025 Z" fill="#aeb3ba"/><rect x="33" y="1022.5" width="1.5" height="5" fill="#aeb3ba"/><path d="M45,1020.5 V1029.5 L53,1025 Z" fill="#aeb3ba"/><rect x="63.5" y="1022.5" width="1.5" height="5" fill="#aeb3ba"/><path d="M66,1021 V1029 L71.5,1025 Z" fill="#aeb3ba"/><path d="M82.5,1021 V1029 L88.5,1025 Z" fill="#aeb3ba"/><rect x="89.5" y="1021" width="1.5" height="8" fill="#aeb3ba"/><rect x="110" y="1019.5" width="11" height="11" fill="#5aaae6"/><rect x="110" y="1025" width="11" height="3" fill="#9fd0f2"/><rect x="128" y="1019.5" width="10" height="10" fill="none" stroke="#c7cbd1" stroke-width="1" stroke-dasharray="1.6,1.2"/><path d="M131,1030 L139,1022" stroke="#e79a4a" stroke-width="1.6"/><path d="M146,1021 L148,1019 H156 V1029 L154,1031 H146 Z" fill="#6fbcef"/><path d="M146,1028 H154 L156,1026 V1029 L154,1031 H146 Z" fill="#dfe7ee"/><rect x="157.5" y="1019" width="0.9" height="10" fill="#dfe4ea"/><path d="M164,1021 L166,1019 H174 V1029 L172,1031 H164 Z" fill="#6fbcef"/><path d="M164,1028 H172 L174,1026 V1029 L172,1031 H164 Z" fill="#dfe7ee"/><rect x="175.5" y="1019" width="0.9" height="10" fill="#dfe4ea"/><path d="M182,1021 L184,1019 H192 V1029 L190,1031 H182 Z" fill="#6fbcef"/><path d="M182,1028 H190 L192,1026 V1029 L190,1031 H182 Z" fill="#dfe7ee"/><rect x="193.5" y="1019" width="0.9" height="10" fill="#dfe4ea"/><path d="M200,1021 L202,1019 H210 V1029 L208,1031 H200 Z" fill="#6fbcef"/><path d="M200,1028 H208 L210,1026 V1029 L208,1031 H200 Z" fill="#dfe7ee"/><rect x="211.5" y="1019" width="0.9" height="10" fill="#dfe4ea"/><path d="M218,1022 L221,1019 H226 Q229,1020 229,1024 V1030 H218 Z" fill="#d6d8dc"/><path d="M224,1019.5 Q229,1020 229,1026 L226,1028 Q226,1023 222,1022 Z" fill="#6fbcef"/><path d="M227.5,1014.5 H237 L233,1021 V1036 H231.5 V1021 Z" fill="#e9ebee"/><path d="M116,1034 V1037 H223.5 V1034 M134,1035 V1037 M152,1035 V1037 M170,1035 V1037 M188,1035 V1037 M206,1035 V1037" fill="none" stroke="#8c929b" stroke-width="0.9"/><path d="M1902.70,1019.57 L1905.50,1019.57 L1906.20,1021.56 L1907.12,1022.28 L1908.27,1021.17 L1909.68,1023.60 L1908.30,1025.20 L1908.14,1026.36 L1909.68,1026.80 L1908.27,1029.23 L1906.20,1028.84 L1905.12,1029.28 L1905.50,1030.83 L1902.70,1030.83 L1902.00,1028.84 L1901.08,1028.12 L1899.93,1029.23 L1898.52,1026.80 L1899.90,1025.20 L1900.06,1024.04 L1898.52,1023.60 L1899.93,1021.17 L1902.00,1021.56 L1903.08,1021.12 Z" fill="#bfc5d0"/><circle cx="1904.1" cy="1025.2" r="1.7" fill="#2f353e"/><rect x="0" y="0" width="1920" height="16" fill="url(#gTitle)"/><rect x="2.5" y="2" width="10.5" height="12" rx="2" fill="#ee6b12"/><rect x="3.5" y="10" width="8.5" height="3" fill="#f6a15a"/><path d="M6.5,4 H9.5 V8.5 H6.5 Z" fill="#fff" opacity="0.95"/><text x="17.5" y="11.7" font-size="9.5" font-weight="normal" fill="#e9e9e9" stroke="#e9e9e9" stroke-width="0.3" textLength="292.5" lengthAdjust="spacingAndGlyphs" >Untitled* (Kwik Fab) - Autodesk Fusion Personal (Not for Commercial Use)</text><rect x="1828" y="7.5" width="10" height="1" fill="#ddd"/><rect x="1862.5" y="5" width="7" height="7" fill="none" stroke="#ddd" stroke-width="1"/><path d="M1864.5,5 V3.5 H1871 V10 H1869.5" fill="none" stroke="#ddd" stroke-width="1"/><path d="M1896.5,3.5 L1905.5,12.5 M1905.5,3.5 L1896.5,12.5" stroke="#e0e0e0" stroke-width="1.1"/><rect x="0" y="16" width="1920" height="25" fill="#262b33"/><path d="M170,41 V24 Q170,20.5 174,20.5 H1719 V41 Z" fill="#3b4350"/><rect x="6.2" y="24.5" width="2.6" height="2.6" fill="#c9ccd1"/><rect x="9.7" y="24.5" width="2.6" height="2.6" fill="#c9ccd1"/><rect x="13.2" y="24.5" width="2.6" height="2.6" fill="#c9ccd1"/><rect x="6.2" y="27.9" width="2.6" height="2.6" fill="#c9ccd1"/><rect x="9.7" y="27.9" width="2.6" height="2.6" fill="#c9ccd1"/><rect x="13.2" y="27.9" width="2.6" height="2.6" fill="#c9ccd1"/><rect x="6.2" y="31.3" width="2.6" height="2.6" fill="#c9ccd1"/><rect x="9.7" y="31.3" width="2.6" height="2.6" fill="#c9ccd1"/><rect x="13.2" y="31.3" width="2.6" height="2.6" fill="#c9ccd1"/><path d="M31.5,24.5 H38 L40.5,27 V34.5 H31.5 Z" fill="#c8cbd0"/><path d="M44.5,28 H49.5 L47,31 Z" fill="#b9bcc2"/><path d="M62,24.5 H71.5 V34.5 H62 Z" fill="#c8cbd0"/><rect x="64" y="25" width="5.5" height="3.5" fill="#262b33"/><rect x="64" y="31" width="5.5" height="3.5" fill="#262b33"/><path d="M87,29 L90,26 V28 Q95,28 95.5,33" fill="none" stroke="#b9bcc2" stroke-width="1.8"/><path d="M100.5,28 H105.5 L103,31 Z" fill="#b9bcc2"/><path d="M122.5,29 L119.5,26 V28 Q114.5,28 114,33" fill="none" stroke="#6b7079" stroke-width="1.8"/><path d="M128.5,28 H133.5 L131,31 Z" fill="#6b7079"/><path d="M147.5,31.5 L153,26.5 L158.5,31.5 H157 V36.5 H149 V31.5 Z" fill="#9fa3aa"/><rect x="151.5" y="33" width="3" height="3.5" fill="#3b4350"/><rect x="915.5" y="30" width="9" height="7" rx="1" fill="#8a8f97"/><path d="M917.5,30 V28 Q920,25 922.5,28 V30" fill="none" stroke="#8a8f97" stroke-width="1.4"/><text x="929.4" y="35.0" font-size="10.5" font-weight="normal" fill="#e4e6e9" stroke="#e4e6e9" stroke-width="0.3" textLength="35.0" lengthAdjust="spacingAndGlyphs" >Untitled*</text><path d="M1706.5,27.5 L1713.5,34.5 M1713.5,27.5 L1706.5,34.5" stroke="#7c828b" stroke-width="1.2"/><path d="M1738.5,25.5 V36.5 M1733,31 H1744" stroke="#c8cbd0" stroke-width="2.2"/><circle cx="1770.5" cy="29.5" r="5.5" fill="#5aa7ea"/><path d="M1770.5,26 V33 M1768,28.5 L1770.5,26 L1773,28.5" stroke="#fff" stroke-width="1.4" fill="none"/><circle cx="1795.5" cy="29.5" r="5.5" fill="#9da2a9"/><path d="M1793,32 L1798,27" stroke="#262b33" stroke-width="1.6"/><circle cx="1820" cy="29.5" r="5.5" fill="#9da2a9"/><path d="M1820,26.5 V29.5 H1823" stroke="#262b33" stroke-width="1.4" fill="none"/><path d="M1841,33.5 Q1842,31 1842,28.5 Q1842,24.5 1845,24.5 Q1848,24.5 1848,28.5 Q1848,31 1849,33.5 Z" fill="#b4b8be"/><circle cx="1845" cy="35" r="1.2" fill="#b4b8be"/><circle cx="1869.5" cy="29.5" r="5.5" fill="#b4b8be"/><text x="1867" y="32.5" font-size="8" font-weight="bold" fill="#262b33">?</text><circle cx="1901" cy="29.5" r="9" fill="#8996a8"/><circle cx="1901" cy="27" r="4.2" fill="#b6c1cf"/><path d="M1894,36 Q1901,29 1908,36" fill="#b6c1cf"/><rect x="0" y="41" width="1920" height="64" fill="#3b4350"/><rect x="8.5" y="49.5" width="82" height="45" rx="3" fill="none" stroke="#59616d" stroke-width="1"/><text x="32.7" y="74.3" font-size="8" font-weight="normal" fill="#e0e3e7" stroke="#e0e3e7" stroke-width="0.3" textLength="27.9" lengthAdjust="spacingAndGlyphs" >DESIGN</text><path d="M67,71 H71 L69,73.2 Z" fill="#c0c4ca"/><text x="112.5" y="52.5" font-size="8.6" font-weight="normal" fill="#e6e8eb" stroke="#e6e8eb" stroke-width="0.3" textLength="22.5" lengthAdjust="spacingAndGlyphs" >SOLID</text><text x="170.6" y="52.5" font-size="8.6" font-weight="normal" fill="#d2d5da" stroke="#d2d5da" stroke-width="0.3" textLength="35.4" lengthAdjust="spacingAndGlyphs" >SURFACE</text><text x="244.4" y="52.5" font-size="8.6" font-weight="normal" fill="#d2d5da" stroke="#d2d5da" stroke-width="0.3" textLength="20.6" lengthAdjust="spacingAndGlyphs" >MESH</text><text x="303.0" y="52.5" font-size="8.6" font-weight="normal" fill="#d2d5da" stroke="#d2d5da" stroke-width="0.3" textLength="50.8" lengthAdjust="spacingAndGlyphs" >SHEET METAL</text><text x="395.6" y="52.5" font-size="8.6" font-weight="normal" fill="#d2d5da" stroke="#d2d5da" stroke-width="0.3" textLength="31.4" lengthAdjust="spacingAndGlyphs" >PLASTIC</text><text x="465.0" y="52.5" font-size="8.6" font-weight="normal" fill="#d2d5da" stroke="#d2d5da" stroke-width="0.3" textLength="33.8" lengthAdjust="spacingAndGlyphs" >MANAGE</text><text x="535.0" y="52.5" font-size="8.6" font-weight="normal" fill="#d2d5da" stroke="#d2d5da" stroke-width="0.3" textLength="32.5" lengthAdjust="spacingAndGlyphs" >UTILITIES</text><rect x="104" y="57" width="43" height="2" fill="#e8eaed"/><text x="175.6" y="98.1" font-size="8.5" font-weight="normal" fill="#d8dbdf" stroke="#d8dbdf" stroke-width="0.3" textLength="28.8" lengthAdjust="spacingAndGlyphs" >CREATE</text><path d="M208.0,94 H212.0 L210.0,96.2 Z" fill="#c0c4ca"/><text x="378.0" y="98.1" font-size="8.5" font-weight="normal" fill="#d8dbdf" stroke="#d8dbdf" stroke-width="0.3" textLength="28.0" lengthAdjust="spacingAndGlyphs" >MODIFY</text><path d="M411.0,94 H415.0 L413.0,96.2 Z" fill="#c0c4ca"/><text x="542.0" y="98.1" font-size="8.5" font-weight="normal" fill="#d8dbdf" stroke="#d8dbdf" stroke-width="0.3" textLength="40.5" lengthAdjust="spacingAndGlyphs" >ASSEMBLE</text><path d="M587.0,94 H591.0 L589.0,96.2 Z" fill="#c0c4ca"/><text x="648.0" y="98.1" font-size="8.5" font-weight="normal" fill="#d8dbdf" stroke="#d8dbdf" stroke-width="0.3" textLength="43.0" lengthAdjust="spacingAndGlyphs" >CONFIGURE</text><path d="M696.0,94 H700.0 L698.0,96.2 Z" fill="#c0c4ca"/><text x="724.0" y="98.1" font-size="8.5" font-weight="normal" fill="#d8dbdf" stroke="#d8dbdf" stroke-width="0.3" textLength="46.0" lengthAdjust="spacingAndGlyphs" >CONSTRUCT</text><path d="M774.0,94 H778.0 L776.0,96.2 Z" fill="#c0c4ca"/><text x="803.5" y="98.1" font-size="8.5" font-weight="normal" fill="#d8dbdf" stroke="#d8dbdf" stroke-width="0.3" textLength="29.9" lengthAdjust="spacingAndGlyphs" >INSPECT</text><path d="M838.0,94 H842.0 L840.0,96.2 Z" fill="#c0c4ca"/><text x="872.0" y="98.1" font-size="8.5" font-weight="normal" fill="#d8dbdf" stroke="#d8dbdf" stroke-width="0.3" textLength="25.0" lengthAdjust="spacingAndGlyphs" >INSERT</text><path d="M902.0,94 H906.0 L904.0,96.2 Z" fill="#c0c4ca"/><text x="937.0" y="98.1" font-size="8.5" font-weight="normal" fill="#d8dbdf" stroke="#d8dbdf" stroke-width="0.3" textLength="27.7" lengthAdjust="spacingAndGlyphs" >SELECT</text><path d="M968.0,94 H972.0 L970.0,96.2 Z" fill="#c0c4ca"/><rect x="295.6" y="60" width="1" height="40" fill="#4a525e"/><rect x="497.5" y="60" width="1" height="40" fill="#4a525e"/><rect x="635.0" y="60" width="1" height="40" fill="#4a525e"/><rect x="711.0" y="60" width="1" height="40" fill="#4a525e"/><rect x="789.7" y="60" width="1" height="40" fill="#4a525e"/><rect x="853.0" y="60" width="1" height="40" fill="#4a525e"/><rect x="925.3" y="60" width="1" height="40" fill="#4a525e"/><rect x="105" y="63" width="18" height="18" fill="none" stroke="#dfe2e6" stroke-width="1.2"/><circle cx="105" cy="63" r="1.4" fill="#fff"/><circle cx="123" cy="63" r="1.4" fill="#fff"/><circle cx="105" cy="81" r="1.4" fill="#fff"/><circle cx="123" cy="81" r="1.4" fill="#fff"/><path d="M109,80 V68 H118 Q118,76 109,80" fill="none" stroke="#dfe2e6" stroke-width="1.1"/><path d="M120,74 V86 M114,80 H126" stroke="#3fcf5a" stroke-width="3"/><path d="M136,64 L138,61.5 H152 V79 L150,82 H136 Z" fill="#6db9ef"/><path d="M150,64 L152,61.5 V79 L150,82 Z" fill="#4a9ad6"/><path d="M135.5,82 H150 L152.5,79.5 V83 L150,85.5 H135.5 Z" fill="#f0f1f3"/><path d="M156,82 V62 M154,65 L156,62 L158,65" stroke="#eee" stroke-width="1.1" fill="none"/><path d="M168,72 Q179,64 190,71 V80 Q185,76.5 179,76.5 Q172.5,76.5 168,81 Z" fill="#6db9ef"/><path d="M168,72 Q179,64 190,71 L188,73 Q179,67 170,74 Z" fill="#9fd3f6"/><path d="M186,72.5 L190,71 V80 L186,78 Z" fill="#f3f3f3"/><path d="M169,66.5 Q179,59.5 189.5,65" fill="none" stroke="#eee" stroke-width="1.3"/><path d="M168,68 L169,64.5 L172,66" fill="#eee"/><path d="M200,65 L203,62 H223 V82 L220,85 H200 Z" fill="#d9dbde"/><path d="M220,65 L223,62 V82 L220,85 Z" fill="#b9bcc1"/><circle cx="208.5" cy="74.5" r="5.5" fill="#6db9ef" stroke="#3a4048" stroke-width="1.4"/><path d="M233,64 H251 M233,64 V81 M233,81 H251" stroke="#dfe2e6" stroke-width="1"/><rect x="231" y="62" width="4" height="4" fill="#ddd"/><rect x="249" y="62" width="4" height="4" fill="#6db9ef"/><rect x="231" y="79" width="4" height="4" fill="#6db9ef"/><rect x="249" y="79" width="4" height="4" fill="#6db9ef"/><path d="M264,66 L267,62 H285 V80 L282,84 H264 Z" fill="#b58ee8"/><path d="M264,66 H282 V84" fill="none" stroke="#d7bdf7" stroke-width="0.8"/><path d="M282,73 V87 M275,80 H289" stroke="#3fcf5a" stroke-width="3"/><path d="M305,66 Q305,61 309,61 H314 V85 H305 Z" fill="#e8e9eb"/><path d="M309,64 Q309,61 313,61 H319 Q322,61 322,64 V85 H309 Z" fill="#6db9ef"/><path d="M322,73 H327 M325,71 L327,73 L325,75" stroke="#eee" stroke-width="1.1" fill="none"/><path d="M337,66 L341,62 H350 Q360,62 360,75 V81 L357,85 H337 Z" fill="#d6d8dc"/><path d="M347,62 Q360,62 360,75 L356,79 Q356,68 345,66 Z" fill="#6db9ef"/><path d="M369.5,66 L373,62 H393 V82 L389,85.5 H369.5 Z" fill="#e4e6e9"/><path d="M389,66 L393,62 V82 L389,85.5 Z" fill="#b5b8bd"/><rect x="372" y="69" width="15" height="14" fill="#2d333c"/><path d="M372,69 H377 V78 H387 V83 H372 Z" fill="#6db9ef"/><path d="M401,73 L404,70 H410 V64 L413,61 H425 V77 L422,80 H416 V85 H401 Z" fill="#6db9ef"/><path d="M422,64 L425,61 V77 L422,80 Z" fill="#4a9ad6"/><path d="M434,64 L437,61 H456 V71 L453,74 H434 Z" fill="#6db9ef"/><path d="M433,76 H457" stroke="#4a9ad6" stroke-width="1.2"/><path d="M434,78 H453 L456,75 V82 L453,85 H434 Z" fill="#dadcdf"/><path d="M477.5,62 V85 M466,73.5 H489" stroke="#f2f3f5" stroke-width="2.2"/><path d="M474,65.5 L477.5,61.5 L481,65.5 Z M474,81.5 L477.5,85.5 L481,81.5 Z M469.5,70 L465.5,73.5 L469.5,77 Z M485.5,70 L489.5,73.5 L485.5,77 Z" fill="#f2f3f5"/><path d="M508,68 L512,64.5 H527.5 V80 L524,84 H508 Z" fill="#dfe1e4"/><path d="M524,68 L527.5,64.5 V80 L524,84 Z" fill="#b9bcc1"/><path d="M508,68 H524 V84" fill="none" stroke="#c5c8cc" stroke-width="0.6"/><path d="M505.5,66 H514 M511.5,62.5 L515,66 L511.5,69.5" stroke="#6db9ef" stroke-width="2.4" fill="none"/><path d="M519.5,82.5 L526.5,76" stroke="#f2f2f2" stroke-width="4" stroke-linecap="round"/><path d="M519.5,82.5 L526.5,76" stroke="#3b4350" stroke-width="1.6" stroke-linecap="round"/><path d="M521.5,80.5 L524.5,78" stroke="#f2f2f2" stroke-width="1.2"/><path d="M539,67 L541,64 H547 V74 H539 Z" fill="#6db9ef"/><rect x="539" y="75" width="8" height="10" fill="#e0e2e5"/><rect x="548" y="75" width="10" height="10" fill="#e0e2e5"/><path d="M556.5,61 V72 M551,66.5 H562" stroke="#3fcf5a" stroke-width="2.4"/><rect x="570.5" y="75" width="8" height="8" fill="#dedfe2"/><rect x="583" y="62" width="10.5" height="9" fill="#6db9ef"/><path d="M581,66 V84" stroke="#d05a6a" stroke-width="0.9"/><rect x="603" y="61.5" width="4" height="4" fill="#6db9ef"/><rect x="603" y="67" width="8" height="4" fill="#d9dbde"/><path d="M606,71 V84 H614 M606,75 H614 M606,79.5 H614" fill="none" stroke="#d9dbde" stroke-width="1"/><rect x="614" y="67.5" width="13" height="17" fill="#e3e5e8"/><path d="M614,71 H627 M614,74.5 H627 M614,78 H627 M614,81.5 H627" stroke="#9aa0a8" stroke-width="0.8"/><path d="M646.5,66 L650,62.5 H663 V82 H646.5 Z" fill="#8d929a"/><circle cx="664" cy="67.5" r="5.5" fill="#2b8de0"/><path d="M665.5,63.5 L662.5,67.5 H665 L663.5,70.5" stroke="#fff" stroke-width="1.1" fill="none"/><rect x="679.5" y="66" width="17.5" height="16.5" rx="1.5" fill="none" stroke="#8d939b" stroke-width="1.3"/><path d="M681.5,68.5 h3 v3 h-3 z M686,68.5 h3 v3 h-3 z M681.5,73 h3 v3 h-3 z M686,73 h3 v3 h-3 z M681.5,77.5 h3 v3 h-3 z M686,77.5 h3 v3 h-3 z M690.5,73 h4 v3 h-4 z M690.5,77.5 h4 v3 h-4 z" fill="#9aa0a8"/><circle cx="696" cy="67" r="5.5" fill="#2b8de0"/><path d="M697,63.5 L694,67.5 H696.5 L695,70.8" stroke="#fff" stroke-width="1.3" fill="none"/><path d="M740,67 L744,62.5 L748,62 V80 L743,85 L740,85 Z" fill="#e6e7ea"/><path d="M744,64 L749,62 V81 L744,84.5 Z" fill="#6fc98d"/><path d="M756,65 L763,61.5 V80 L756,84 Z" fill="#f0a56e"/><path d="M811,67 V72 M833,67 V72 M811,69.5 H833" stroke="#e9eaec" stroke-width="1"/><rect x="811" y="73.5" width="22" height="5.5" fill="#f2cf62"/><path d="M813,73.5 V76 M816,73.5 V76 M819,73.5 V76 M822,73.5 V76 M825,73.5 V76 M828,73.5 V76 M831,73.5 V76" stroke="#9e8234" stroke-width="0.7"/><path d="M863,62 H881 V68 H875 V85 H869 V68 H863 Z" fill="#6db9ef"/><path d="M880,74 V86 M874,80 H886" stroke="#3fcf5a" stroke-width="2.6"/><rect x="895" y="62" width="22" height="22" fill="#6db9ef"/><path d="M895,84 V77 L901,71 L907,77 L911,74 L917,79 V84 Z" fill="#3b87c4"/><circle cx="910.5" cy="67.5" r="2" fill="#f5e27a"/><rect x="939" y="58" width="29.5" height="29.5" fill="#3a5673"/><rect x="942.5" y="61.5" width="21" height="17" fill="none" stroke="#7fd6e6" stroke-width="1" stroke-dasharray="2,1.6"/><path d="M957,72.5 V85 L960,82 L962.5,86.5 L964.5,85.5 L962,81.5 L966,81 Z" fill="#fff"/></svg>
</div></body></html>
